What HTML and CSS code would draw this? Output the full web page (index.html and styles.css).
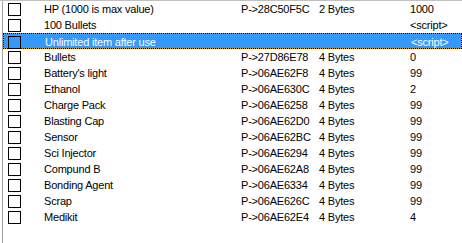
FILE: index.html
```html
<!DOCTYPE html>
<html>
<head>
<meta charset="utf-8">
<link rel="stylesheet" href="styles.css">
</head>
<body>
<div class="frame">
  <div class="list">
    <div class="row"><span class="cb"></span><span>HP (1000 is max value)</span><span>P-&gt;28C50F5C</span><span>2 Bytes</span><span>1000</span></div>
    <div class="row"><span class="cb"></span><span>100 Bullets</span><span></span><span></span><span>&lt;script&gt;</span></div>
    <div class="row sel"><span class="cb"></span><span>Unlimited item after use</span><span></span><span></span><span>&lt;script&gt;</span></div>
    <div class="row"><span class="cb"></span><span>Bullets</span><span>P-&gt;27D86E78</span><span>4 Bytes</span><span>0</span></div>
    <div class="row"><span class="cb"></span><span>Battery's light</span><span>P-&gt;06AE62F8</span><span>4 Bytes</span><span>99</span></div>
    <div class="row"><span class="cb"></span><span>Ethanol</span><span>P-&gt;06AE630C</span><span>4 Bytes</span><span>2</span></div>
    <div class="row"><span class="cb"></span><span>Charge Pack</span><span>P-&gt;06AE6258</span><span>4 Bytes</span><span>99</span></div>
    <div class="row"><span class="cb"></span><span>Blasting Cap</span><span>P-&gt;06AE62D0</span><span>4 Bytes</span><span>99</span></div>
    <div class="row"><span class="cb"></span><span>Sensor</span><span>P-&gt;06AE62BC</span><span>4 Bytes</span><span>99</span></div>
    <div class="row"><span class="cb"></span><span>Sci Injector</span><span>P-&gt;06AE6294</span><span>4 Bytes</span><span>99</span></div>
    <div class="row"><span class="cb"></span><span>Compund B</span><span>P-&gt;06AE62A8</span><span>4 Bytes</span><span>99</span></div>
    <div class="row"><span class="cb"></span><span>Bonding Agent</span><span>P-&gt;06AE6334</span><span>4 Bytes</span><span>99</span></div>
    <div class="row"><span class="cb"></span><span>Scrap</span><span>P-&gt;06AE626C</span><span>4 Bytes</span><span>99</span></div>
    <div class="row"><span class="cb"></span><span>Medikit</span><span>P-&gt;06AE62E4</span><span>4 Bytes</span><span>4</span></div>
  </div>
</div>
</body>
</html>
```
FILE: styles.css
```css
html, body {
  margin: 0;
  padding: 0;
  background: #ffffff;
}
body {
  width: 462px;
  height: 243px;
  overflow: hidden;
  font-family: "Liberation Sans", Arial, sans-serif;
  font-size: 11px;
  letter-spacing: -0.2px;
  color: #000;
}
.frame {
  border-top: 1px solid #c0c0c0;
  padding-left: 2px;
  height: 242px;
}
.list {
  border-left: 1px solid #a0a0a0;
  height: 242px;
}
.row {
  display: grid;
  grid-template-columns: 41px 197px 78px 91px 1fr;
  align-items: center;
  height: 16px;
  line-height: 16px;
  white-space: nowrap;
  box-sizing: border-box;
}
.cb {
  width: 13px;
  height: 13px;
  box-sizing: border-box;
  border: 1px solid #000;
  margin-left: 5px;
  margin-top: 1px;
}
.sel {
  color: #fff;
  border: 1px dotted #000;
  background: linear-gradient(#3399ff, #3399ff) padding-box, #d8902a border-box;
}
.sel .cb {
  margin-left: 4px;
}
```
